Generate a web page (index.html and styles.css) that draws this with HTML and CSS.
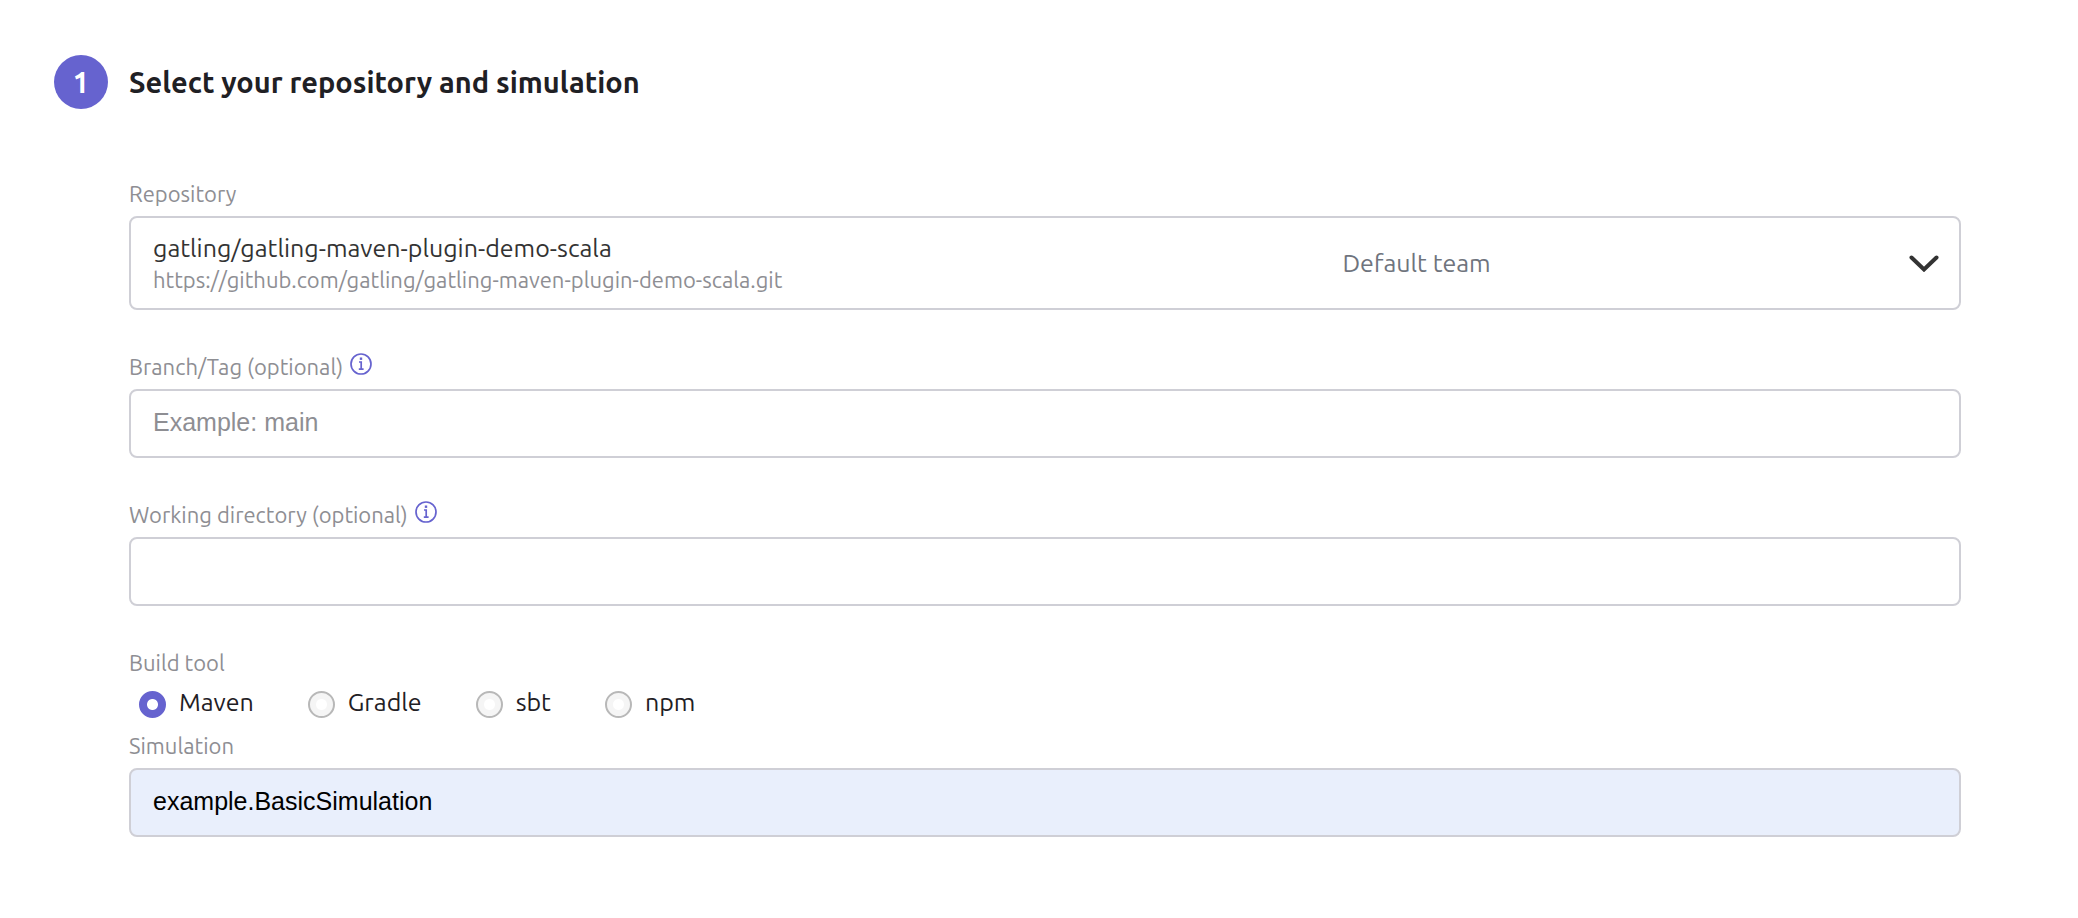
FILE: index.html
```html
<!DOCTYPE html>
<html lang="en">
<head>
    <meta charset="UTF-8">
    <meta name="viewport" content="width=device-width, initial-scale=1.0">
    <title>Create simulation</title>
    <link rel="stylesheet" href="styles.css">
</head>
<body>

    <form class="step">
        <div class="step-header">
            <span class="step-number">1</span>
            <h2>Select your repository and simulation</h2>
        </div>

        <div class="step-body">
            <!-- Repository -->
            <div class="field">
                <div class="field-label">
                    <label for="repository">Repository</label>
                </div>
                <div class="repo-select">
                    <div class="repo-info">
                        <span class="repo-name">gatling/gatling-maven-plugin-demo-scala</span>
                        <span class="repo-url">https://github.com/gatling/gatling-maven-plugin-demo-scala.git</span>
                    </div>
                    <span class="repo-team">Default team</span>
                    <svg class="chevron" viewBox="0 0 30 18" aria-hidden="true">
                        <path d="M2.5 3.5 L15 15.5 L27.5 3.5"/>
                    </svg>
                    <select id="repository" name="repository">
                        <option selected>gatling/gatling-maven-plugin-demo-scala</option>
                    </select>
                </div>
            </div>

            <!-- Branch -->
            <div class="field">
                <div class="field-label">
                    <label for="branch">Branch/Tag (optional)</label>
                    <svg class="info" viewBox="0 0 22 22" aria-hidden="true">
                        <circle cx="11" cy="11" r="10"/>
                        <path d="M9 9 H11.2 V16 M8.8 16.2 H13.6"/>
                        <rect x="9.8" y="4.5" width="2.4" height="2.4"/>
                    </svg>
                </div>
                <input type="text" class="text-input" id="branch" name="branch" placeholder="Example: main">
            </div>

            <!-- Working directory -->
            <div class="field">
                <div class="field-label">
                    <label for="directory">Working directory (optional)</label>
                    <svg class="info" viewBox="0 0 22 22" aria-hidden="true">
                        <circle cx="11" cy="11" r="10"/>
                        <path d="M9 9 H11.2 V16 M8.8 16.2 H13.6"/>
                        <rect x="9.8" y="4.5" width="2.4" height="2.4"/>
                    </svg>
                </div>
                <input type="text" class="text-input" id="directory" name="directory">
            </div>

            <!-- Build tool -->
            <fieldset class="build-tool">
                <legend class="field-label">Build tool</legend>
                <div class="radios">
                    <label class="radio"><input type="radio" name="tool" value="maven" checked><span>Maven</span></label>
                    <label class="radio"><input type="radio" name="tool" value="gradle"><span>Gradle</span></label>
                    <label class="radio"><input type="radio" name="tool" value="sbt"><span>sbt</span></label>
                    <label class="radio"><input type="radio" name="tool" value="npm"><span>npm</span></label>
                </div>
            </fieldset>

            <!-- Simulation -->
            <div class="field">
                <div class="field-label">
                    <label for="simulation">Simulation</label>
                </div>
                <input type="text" class="text-input filled" id="simulation" name="simulation" value="example.BasicSimulation">
            </div>
        </div>
    </form>

</body>
</html>
```
FILE: styles.css
```css
* {
    box-sizing: border-box;
}

body {
    margin: 0;
    background-color: #fff;
    color: #1f2024;
    font-family: Ubuntu, "Noto Sans", sans-serif;
    font-size: 25px;
}

.step {
    padding: 55px 117px 40px 54px;
}

/* Step title */
.step-header {
    display: flex;
    align-items: center;
    gap: 21px;
}

.step-number {
    width: 54px;
    height: 54px;
    border-radius: 50%;
    background-color: #6663cf;
    color: #fff;
    font-size: 29px;
    font-weight: 700;
    line-height: 54px;
    text-align: center;
}

h2 {
    margin: 0;
    font-size: 29px;
    font-weight: 700;
    line-height: 54px;
}

.step-body {
    padding: 69px 0 0 75px;
}

/* Fields */
.field {
    margin-bottom: 41px;
}

.field-label {
    display: flex;
    align-items: center;
    gap: 7px;
    margin-bottom: 6px;
    padding: 0;
    color: #8e8e93;
    font-size: 22px;
    line-height: 32px;
}

.info {
    width: 22px;
    height: 22px;
    margin-bottom: 6px;
    fill: none;
    stroke: #6663cf;
    stroke-width: 1.7;
}

.info rect {
    fill: #6663cf;
    stroke: none;
}

.text-input {
    display: block;
    width: 100%;
    height: 69px;
    padding: 0 22px 2px;
    border: 2px solid #cfcfd6;
    border-radius: 8px;
    background-color: #fff;
    color: #000;
    font-family: "Liberation Sans", Arial, sans-serif;
    font-size: 25px;
}

.text-input::placeholder {
    color: #8e8e93;
}

.text-input.filled {
    background-color: #e9effc;
}

/* Repository drop-down, the native select lies over the drawn value */
.repo-select {
    position: relative;
    display: grid;
    grid-template-columns: 66.6% 1fr 30px;
    align-items: center;
    height: 94px;
    padding: 0 20px 0 22px;
    border: 2px solid #cfcfd6;
    border-radius: 8px;
}

.repo-select select {
    position: absolute;
    inset: 0;
    width: 100%;
    height: 100%;
    opacity: 0;
    cursor: pointer;
}

.repo-info {
    display: flex;
    flex-direction: column;
    padding-top: 2px;
}

.repo-name {
    color: #333;
    line-height: 32px;
}

.repo-url {
    color: #8e8e93;
    font-size: 22px;
    line-height: 32px;
}

.repo-team {
    color: #6f747d;
}

.chevron {
    width: 30px;
    height: 18px;
    fill: none;
    stroke: #333;
    stroke-width: 4;
    stroke-linecap: round;
}

/* Build tool */
.build-tool {
    margin: 0;
    padding: 0;
    border: 0;
}

.radios {
    display: flex;
    gap: 54px;
    padding: 0 0 12px 10px;
}

.radio {
    display: flex;
    align-items: center;
    gap: 13px;
    line-height: 32px;
}

.radio input {
    width: 27px;
    height: 27px;
    margin: 6px 0 0;
    border: 2px solid #b8b8b8;
    border-radius: 50%;
    background: radial-gradient(circle, #fff 5px, #f5f5f5 6px);
    appearance: none;
}

.radio input:checked {
    border-color: #6663cf;
    background: radial-gradient(circle, #fff 5px, #6663cf 6px);
}
```
